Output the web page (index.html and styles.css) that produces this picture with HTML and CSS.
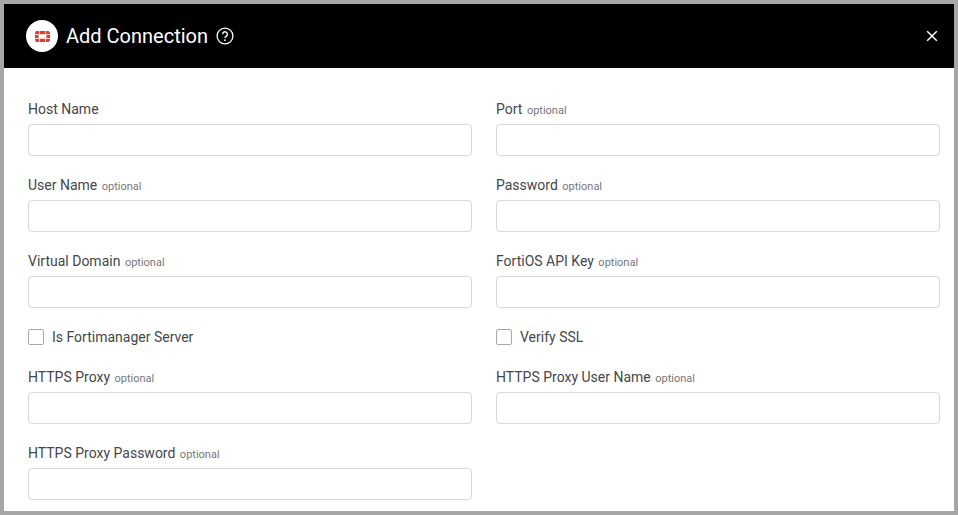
FILE: index.html
```html
<!DOCTYPE html>
<html lang="en">
<head>
<meta charset="utf-8">
<title>Add Connection</title>
<link rel="stylesheet" href="styles.css">
</head>
<body>
<div class="dialog">
  <header class="head">
    <span class="logo">
      <svg width="15" height="11" viewBox="0 0 15 11" fill="#d8402f">
        <path d="M0 3.2V2Q0 0 2 0H4.2V3.2ZM4.9 0H10.1V3.2H4.9ZM10.8 0H13Q15 0 15 2V3.2H10.8ZM0 3.9H3.6V7.1H0ZM11.4 3.9H15V7.1H11.4ZM0 7.8H4.2V11H2Q0 11 0 9ZM4.9 7.8H10.1V11H4.9ZM10.8 7.8H15V9Q15 11 13 11H10.8Z"/>
      </svg>
    </span>
    <h1 class="title">Add Connection</h1>
    <svg class="help" width="18" height="18" viewBox="0 0 18 18" fill="none" stroke="#fff">
      <circle cx="9" cy="9" r="7.9" stroke-width="1.3"/>
      <path d="M6.6 7.2A2.4 2.4 0 1 1 10.4 9.1C9.5 9.7 9 10.1 9 11.1" stroke-width="1.4"/>
      <circle cx="9" cy="13.2" r=".9" fill="#fff" stroke="none"/>
    </svg>
    <svg class="close" width="12" height="12" viewBox="0 0 12 12" stroke="#fff" stroke-width="1.5">
      <path d="M1.2 1.2L10.8 10.8M10.8 1.2L1.2 10.8"/>
    </svg>
  </header>
  <main class="form">
    <div class="field"><label class="label">Host Name</label><div class="input"></div></div>
    <div class="field"><label class="label">Port <small>optional</small></label><div class="input"></div></div>
    <div class="field"><label class="label">User Name <small>optional</small></label><div class="input"></div></div>
    <div class="field"><label class="label">Password <small>optional</small></label><div class="input"></div></div>
    <div class="field"><label class="label">Virtual Domain <small>optional</small></label><div class="input"></div></div>
    <div class="field"><label class="label">FortiOS API Key <small>optional</small></label><div class="input"></div></div>
    <div class="check"><span class="box"></span><span class="check-text">Is Fortimanager Server</span></div>
    <div class="check"><span class="box"></span><span class="check-text">Verify SSL</span></div>
    <div class="field"><label class="label">HTTPS Proxy <small>optional</small></label><div class="input"></div></div>
    <div class="field"><label class="label">HTTPS Proxy User Name <small>optional</small></label><div class="input"></div></div>
    <div class="field"><label class="label">HTTPS Proxy Password <small>optional</small></label><div class="input"></div></div>
  </main>
</div>
</body>
</html>
```
FILE: styles.css
```css
* { box-sizing: border-box; }
html, body { margin: 0; height: 100%; }
body {
  width: 958px;
  height: 515px;
  overflow: hidden;
  font-family: Roboto, "Liberation Sans", sans-serif;
}
.dialog {
  height: 515px;
  border: 4px solid #a6a6a6;
  background: #fff;
  overflow: hidden;
}
.head {
  height: 64px;
  background: #000;
  display: flex;
  align-items: center;
  padding: 0 16px 0 22px;
  color: #fff;
}
.logo {
  width: 32px;
  height: 32px;
  border-radius: 50%;
  background: #fff;
  display: flex;
  align-items: center;
  justify-content: center;
  flex: none;
}
.title {
  margin: 0 0 0 8px;
  font-size: 20px;
  line-height: 28px;
  font-weight: 400;
}
.help { margin-left: 8px; }
.close { margin-left: auto; }
.form {
  display: grid;
  grid-template-columns: 444px 444px;
  column-gap: 24px;
  padding: 32px 24px 0;
}
.field { height: 76px; }
.label {
  display: block;
  height: 24px;
  font-size: 14px;
  line-height: 18px;
  color: #44474a;
}
.label small {
  font-size: 11px;
  color: #777;
  margin-left: 1px;
}
.input {
  height: 32px;
  border: 1px solid #d9d9d9;
  border-radius: 4px;
  background: #fff;
}
.check {
  height: 40px;
  display: flex;
  align-items: flex-start;
  padding-top: 1px;
}
.box {
  width: 16px;
  height: 16px;
  border: 1px solid #a8a8a8;
  border-radius: 2px;
  flex: none;
}
.check-text {
  margin-left: 8px;
  font-size: 14px;
  line-height: 16px;
  color: #44474a;
}
```
